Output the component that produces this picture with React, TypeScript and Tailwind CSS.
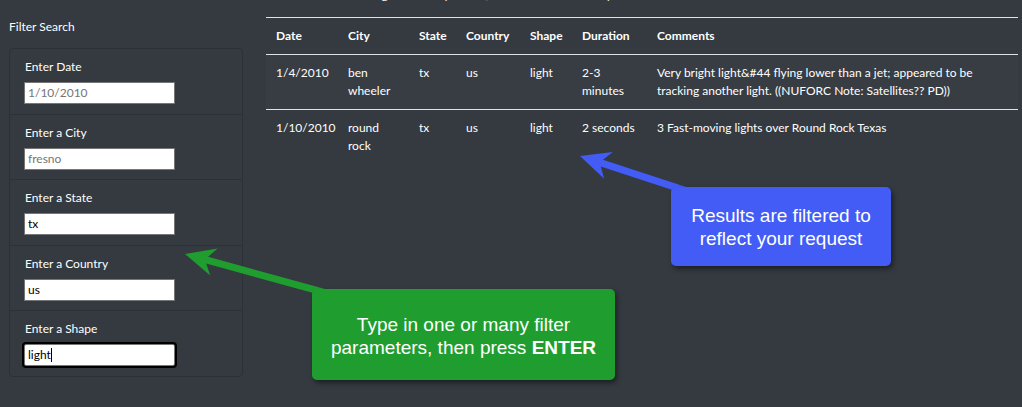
import React from "react";

const filters = [
  { label: "Enter Date", value: "1/10/2010", placeholder: true },
  { label: "Enter a City", value: "fresno", placeholder: true },
  { label: "Enter a State", value: "tx" },
  { label: "Enter a Country", value: "us" },
  { label: "Enter a Shape", value: "light", focused: true },
];

export default function App() {
  return (
    <div className="relative w-[1022px] h-[407px] overflow-hidden bg-[#343a40] text-white text-[12px] leading-[18px] font-['Lato',sans-serif]">
      <div className="flex">
        <aside className="w-[234px] ml-[9px] shrink-0 pt-[18px]">
          <div>Filter Search</div>
          <div className="mt-[12px] border border-[#2c3137] rounded-[4px]">
            {filters.map((f, i) => (
              <div
                key={f.label}
                className={
                  "px-[14px] pt-[9px] pb-[9.5px] " +
                  (i > 0 ? "border-t border-[#2c3137]" : "")
                }
              >
                <div className="mb-[6px] pl-[1px]">{f.label}</div>
                {f.focused ? (
                  <div className="w-[151px] h-[22px] bg-white border border-[#767676] rounded-[2px] outline-2 outline-black flex items-center pl-[3px] text-black">
                    <span>{f.value}</span>
                    <span className="w-px h-[14px] bg-black" />
                  </div>
                ) : (
                  <div
                    className={
                      "w-[151px] h-[22px] bg-white border border-[#767676] flex items-center pl-[3px] " +
                      (f.placeholder ? "text-[#757575]" : "text-black")
                    }
                  >
                    {f.value}
                  </div>
                )}
              </div>
            ))}
          </div>
        </aside>
        <main className="ml-[23px] w-[752px] shrink-0">
          <div className="-mt-[14px] pl-[87px] h-[18px] whitespace-nowrap">
            through the data yourself, and let us know what you see.
          </div>
          <table className="mt-[13px] w-full table-fixed border-collapse border-t border-[#dee2e6]">
            <colgroup>
              <col className="w-[72px]" />
              <col className="w-[71px]" />
              <col className="w-[47px]" />
              <col className="w-[64px]" />
              <col className="w-[52px]" />
              <col className="w-[75px]" />
              <col />
            </colgroup>
            <thead>
              <tr className="border-b border-[#dee2e6]">
                {["Date", "City", "State", "Country", "Shape", "Duration", "Comments"].map((h) => (
                  <th key={h} className="text-left font-bold px-[10px] py-[9px] whitespace-nowrap">
                    {h}
                  </th>
                ))}
              </tr>
            </thead>
            <tbody>
              <tr className="border-b border-[#dee2e6] bg-white/[0.02] align-top">
                <td className="px-[10px] py-[9px]">1/4/2010</td>
                <td className="px-[10px] py-[9px]">ben<br />wheeler</td>
                <td className="px-[10px] py-[9px]">tx</td>
                <td className="px-[10px] py-[9px]">us</td>
                <td className="px-[10px] py-[9px]">light</td>
                <td className="px-[10px] py-[9px]">2-3<br />minutes</td>
                <td className="px-[10px] py-[9px] whitespace-nowrap">
                  Very bright light&amp;#44 flying lower than a jet; appeared to be
                  <br />
                  tracking another light. ((NUFORC Note: Satellites?? PD))
                </td>
              </tr>
              <tr className="align-top">
                <td className="px-[10px] py-[9px]">1/10/2010</td>
                <td className="px-[10px] py-[9px]">round<br />rock</td>
                <td className="px-[10px] py-[9px]">tx</td>
                <td className="px-[10px] py-[9px]">us</td>
                <td className="px-[10px] py-[9px]">light</td>
                <td className="px-[10px] py-[9px] whitespace-nowrap">2 seconds</td>
                <td className="px-[10px] py-[9px] whitespace-nowrap">3 Fast-moving lights over Round Rock Texas</td>
              </tr>
            </tbody>
          </table>
        </main>
      </div>

      <svg className="absolute inset-0 pointer-events-none" width="1022" height="407" viewBox="0 0 1022 407">
        <polygon
          points="0,0 30,-14 23,-3.5 150,-3.5 150,3.5 23,3.5 30,14"
          fill="#1f9e2f"
          transform="translate(185,254) rotate(15.4)"
        />
        <polygon
          points="0,0 30,-14 23,-3.5 125,-3.5 125,3.5 23,3.5 30,14"
          fill="#425cf5"
          transform="translate(580,156) rotate(18.1)"
        />
      </svg>

      <div className="absolute left-[312px] top-[289px] w-[303px] h-[91px] bg-[#1f9e2f] rounded-[5px] shadow-[2px_3px_5px_rgba(0,0,0,0.45)] flex items-center justify-center text-center text-[19px] leading-[23px] font-['Liberation_Sans',Arial,sans-serif] text-white">
        <div className="mt-[3px]">
          Type in one or many filter
          <br />
          parameters, then press <b>ENTER</b>
        </div>
      </div>

      <div className="absolute left-[671px] top-[187px] w-[220px] h-[79px] bg-[#425cf5] rounded-[5px] shadow-[2px_3px_5px_rgba(0,0,0,0.45)] flex items-center justify-center text-center text-[19px] leading-[23px] font-['Liberation_Sans',Arial,sans-serif] text-white">
        <div>
          Results are filtered to
          <br />
          reflect your request
        </div>
      </div>
    </div>
  );
}
